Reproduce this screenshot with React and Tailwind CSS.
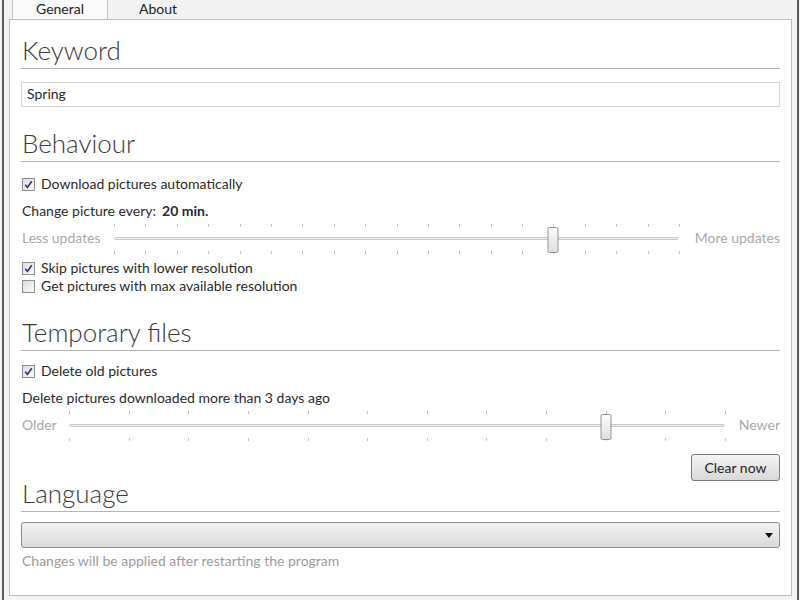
import React from 'react';

const font = { fontFamily: 'Lato, "Open Sans", sans-serif' };

function Heading({ children, className = '' }) {
  return (
    <div className={`flex h-[31px] items-end border-b border-[#b4b4b4] text-[26px] leading-[30px] font-light text-[#3a3a3a] ${className}`}>
      <span className="mb-[3px] pl-px">{children}</span>
    </div>
  );
}

function Check({ checked, label, className = '' }) {
  return (
    <div className={`flex h-[18px] items-center text-[14px] text-[#2a2a2a] ${className}`}>
      <span className="ml-px flex h-[13px] w-[13px] shrink-0 items-center justify-center border border-[#8f8f8f] bg-gradient-to-br from-[#dcdcdc] to-[#fbfbfb]">
        {checked && (
          <svg width="9" height="9" viewBox="0 0 9 9">
            <path d="M1.2 4.8 L3.4 7.4 L7.8 1.2" fill="none" stroke="#2c3a7a" strokeWidth="1.7" />
          </svg>
        )}
      </span>
      <span className="mb-[2px] ml-[6px]">{label}</span>
    </div>
  );
}

function Slider({ left, right, ticks, pos, className = '', leftW, rightW }) {
  const marks = Array.from({ length: ticks + 1 }, (_, i) => i);
  return (
    <div className={`flex h-[34px] items-center text-[14px] text-[#a9a9a9] ${className}`}>
      <span className={`mb-[3px] pl-px ${leftW}`}>{left}</span>
      <div className="relative h-full flex-1">
        <div className="absolute left-0 right-0 top-[15px] h-[3px] rounded-sm border border-[#cacaca] bg-[#eeeeee]" />
        {marks.map((i) => (
          <React.Fragment key={i}>
            <div className="absolute top-[2px] h-[3px] w-px bg-[#c2c2c2]" style={{ left: `${(i / ticks) * 100}%` }} />
            <div className="absolute top-[29px] h-[3px] w-px bg-[#c2c2c2]" style={{ left: `${(i / ticks) * 100}%` }} />
          </React.Fragment>
        ))}
        <div
          className="absolute top-[5px] h-[26px] w-[11px] -translate-x-1/2 rounded-[2px] border border-[#909090] bg-gradient-to-b from-[#fdfdfd] to-[#dedede]"
          style={{ left: `${(pos / ticks) * 100}%` }}
        />
      </div>
      <span className={`mb-[3px] text-right ${rightW}`}>{right}</span>
    </div>
  );
}

export default function App() {
  return (
    <div className="flex h-[600px] w-[800px] overflow-hidden bg-[#f3f3f3]" style={font}>
      <div className="ml-[2px] w-[2px] bg-[#5a5a5a]" />
      <div className="ml-[5px] flex w-[783px] flex-col">
        <div className="flex h-[19px] text-[14px] text-[#222]">
          <div className="ml-[3px] flex w-[96px] items-end justify-center border-x border-[#c4c4c4] bg-[#fafafa] pb-[2px] leading-[16px]">General</div>
          <div className="flex w-[100px] items-end justify-center pb-[2px] leading-[16px]">About</div>
        </div>
        <div className="flex h-[577px] flex-col border border-[#bdbdbd] bg-white px-[11px]">
          <Heading className="mt-[18px]">Keyword</Heading>
          <div className="mt-[13px] flex h-[25px] items-center border border-[#d4d4d4] px-[5px] pb-[2px] text-[14px] text-[#2a2a2a]">Spring</div>

          <Heading className="mt-[24px]">Behaviour</Heading>
          <Check className="mt-[13px]" checked label="Download pictures automatically" />
          <div className="mt-[9px] flex h-[18px] items-center pb-[2px] pl-px text-[14px] text-[#2a2a2a]">
            Change picture every:<span className="ml-[6px] font-bold">20 min.</span>
          </div>
          <Slider className="mt-[2px]" left="Less updates" right="More updates" ticks={18} pos={14} leftW="w-[93px]" rightW="w-[101px]" />
          <Check className="mt-[3px]" checked label="Skip pictures with lower resolution" />
          <Check checked={false} label="Get pictures with max available resolution" />

          <Heading className="mt-[25px]">Temporary files</Heading>
          <Check className="mt-[11px]" checked label="Delete old pictures" />
          <div className="mt-[9px] flex h-[18px] items-center pb-[2px] pl-px text-[14px] text-[#2a2a2a]">
            Delete pictures downloaded more than 3 days ago
          </div>
          <Slider className="mt-[2px]" left="Older" right="Newer" ticks={11} pos={9} leftW="w-[48px]" rightW="w-[55px]" />
          <div className="mt-[11px] flex justify-end">
            <button className="h-[27px] w-[89px] rounded-[3px] border border-[#7a7a7a] bg-gradient-to-b from-[#f4f4f4] to-[#d9d9d9] pb-px text-[14px] text-[#1e1e1e]">
              Clear now
            </button>
          </div>

          <Heading className="h-[30px]">Language</Heading>
          <div className="mt-[10px] flex h-[26px] items-center justify-end rounded-[3px] border border-[#8a8a8a] bg-gradient-to-b from-[#f2f2f2] to-[#dadada] pr-[6px]">
            <svg width="8" height="5" viewBox="0 0 8 5">
              <path d="M0 0 H8 L4 5 Z" fill="#111" />
            </svg>
          </div>
          <div className="mt-[4px] flex h-[18px] items-center pb-[2px] pl-px text-[14px] text-[#9c9c9c]">
            Changes will be applied after restarting the program
          </div>
        </div>
      </div>
      <div className="ml-[5px] w-[2px] bg-[#5a5a5a]" />
    </div>
  );
}
